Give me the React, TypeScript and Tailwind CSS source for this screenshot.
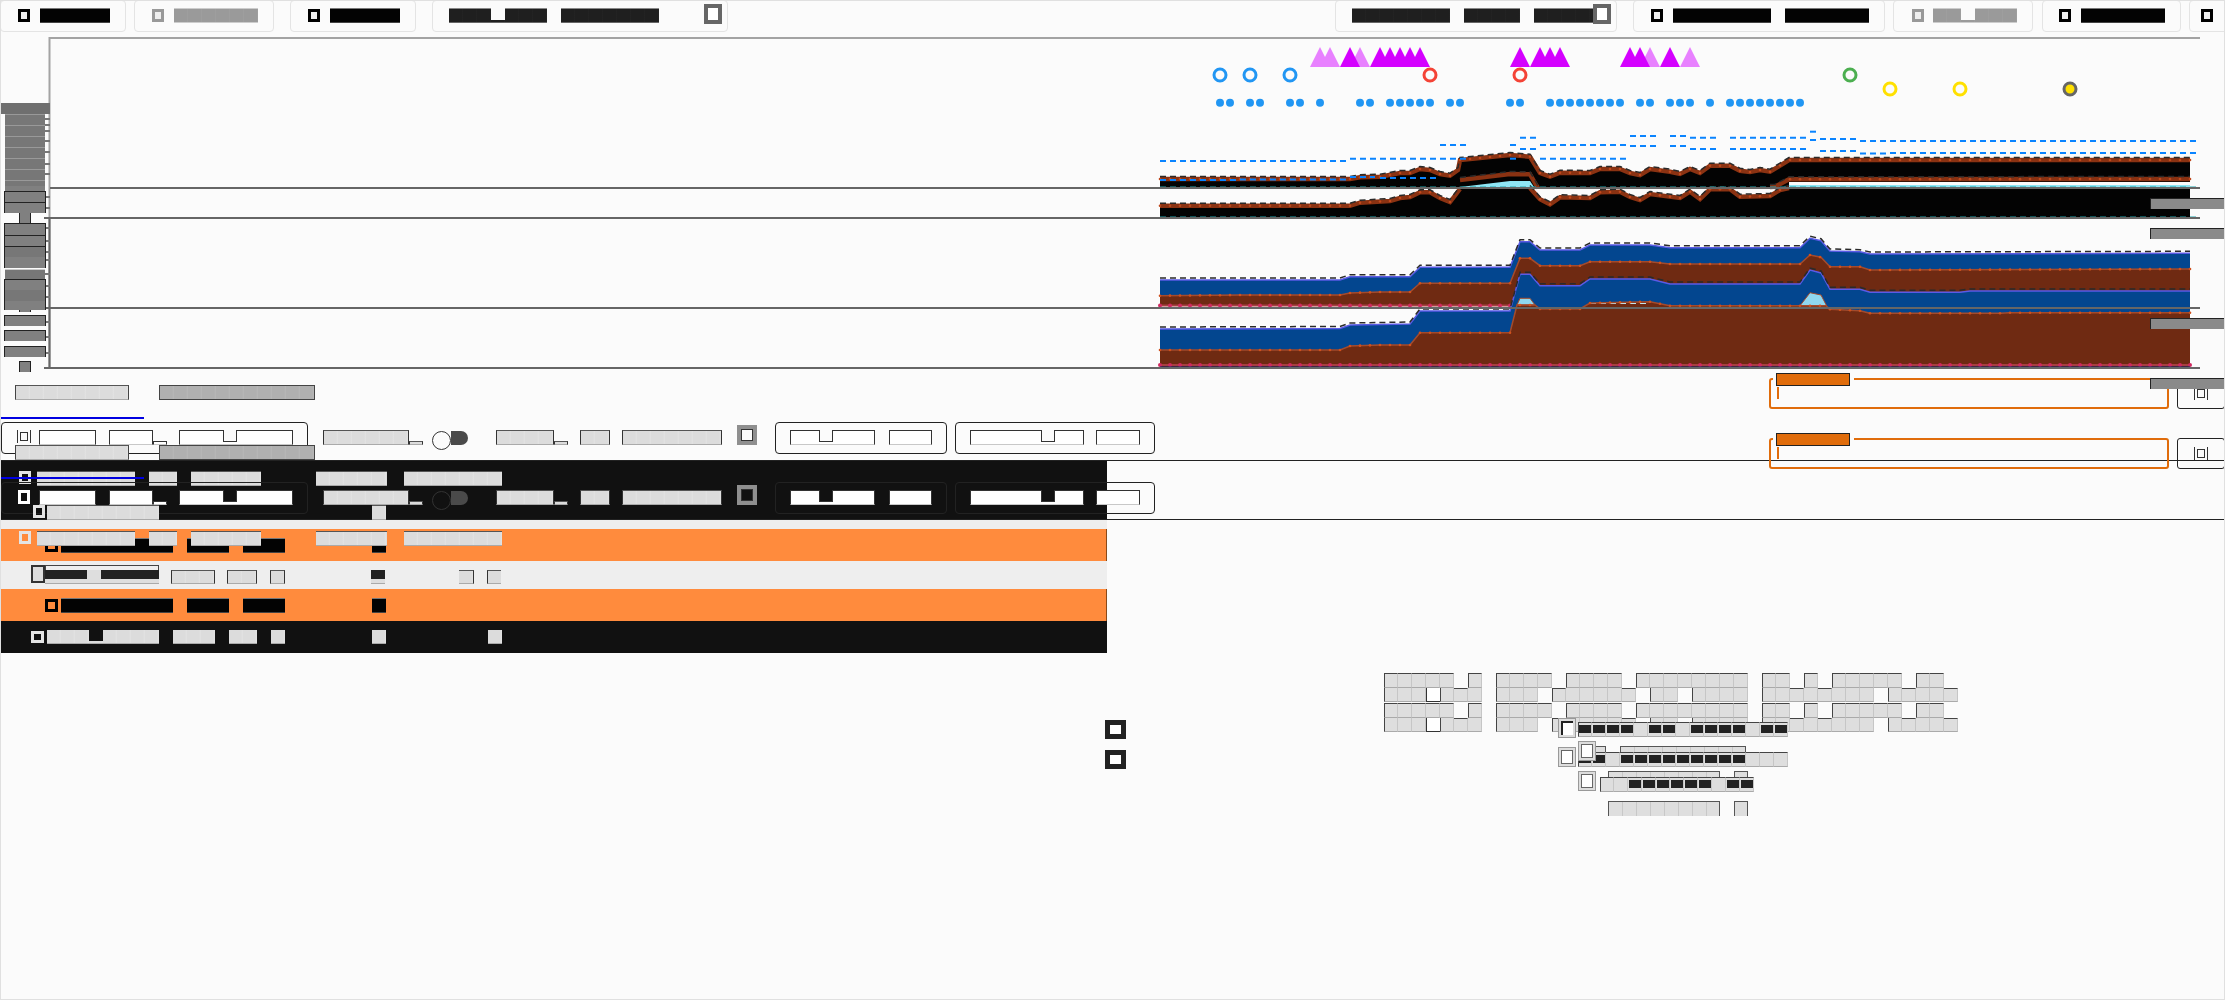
import clsx from "clsx";

type Pt = [number, number];
type Tone = "light" | "mid" | "black" | "dark" | "gray" | "white" | "grid";

const TONES: Record<Tone, string> = {
  light:
    "border-y border-t-[#555] border-b-[#aaa] bg-[repeating-linear-gradient(90deg,#dcdcdc_0,#dcdcdc_12px,#e3e3e3_14px)]",
  mid: "border border-[#444] bg-[repeating-linear-gradient(90deg,#b0b0b0_0,#b0b0b0_12px,#b8b8b8_14px)]",
  black: "border-y border-t-[#777] border-b-[#444] bg-[#030303]",
  dark: "border-y border-t-[#888] border-b-[#666] bg-[repeating-linear-gradient(90deg,#1f1f1f_0,#1f1f1f_13px,#262626_14px)]",
  gray: "border-y border-t-[#ccc] border-b-[#ccc] bg-[repeating-linear-gradient(90deg,#9a9a9a_0,#9a9a9a_13px,#a2a2a2_14px)]",
  white: "border-x border-t border-[#333] border-b border-b-[#c8c8c8] bg-white",
  grid: "border-x border-t border-[#555] bg-[repeating-linear-gradient(90deg,#dedede_0,#dedede_13px,#c8c8c8_13px,#c8c8c8_14px)]",
};

function Tofu({
  className = "",
  tone = "light",
  notch,
}: {
  className?: string;
  tone?: Tone;
  notch?: string;
}) {
  // default to one line of text unless the caller gave a height
  const placed = className.includes("absolute");
  const sized = /(^|\s)h-\[/.test(className);
  return (
    <div className={clsx(!placed && "relative", !sized && "h-[15px]", "shrink-0", TONES[tone], className)}>
      {notch && <div className={clsx("absolute -top-px h-[12px]", notch)} />}
    </div>
  );
}

function Check({ className }: { className?: string }) {
  return <div className={clsx("mt-px h-[13px] w-[12px] shrink-0 border-[3px] bg-[#eee]", className)} />;
}

function Glyph({ className }: { className?: string }) {
  return (
    <div className={clsx("flex h-[13px] w-[14px] items-center justify-center border-x border-[#333]", className)}>
      <div className="h-[9px] w-[8px] border border-[#333]" />
    </div>
  );
}

function Frame({ className }: { className?: string }) {
  return <div className={clsx("h-[20px] w-[18px] shrink-0 border-[4px] border-[#666] bg-white", className)} />;
}

function ToolButton({ className, children }: { className?: string; children: React.ReactNode }) {
  return (
    <div className={clsx("flex h-[32px] shrink-0 items-start rounded-[4px] border border-[#e4e4e4] pt-[7px]", className)}>
      {children}
    </div>
  );
}

function Toolbar() {
  return (
    <div className="flex h-[37px] items-start">
      <ToolButton className="w-[126px] pl-[17px]">
        <Check className="border-black" />
        <Tofu tone="black" className="ml-[10px] w-[70px]" />
      </ToolButton>
      <ToolButton className="ml-[8px] w-[140px] pl-[17px]">
        <Check className="border-[#999]" />
        <Tofu tone="gray" className="ml-[10px] w-[84px]" />
      </ToolButton>
      <ToolButton className="ml-[16px] w-[126px] pl-[17px]">
        <Check className="border-black" />
        <Tofu tone="black" className="ml-[10px] w-[70px]" />
      </ToolButton>
      <ToolButton className="ml-[16px] w-[296px] pl-[16px]">
        <Tofu tone="dark" className="w-[98px]" notch="left-[42px] w-[14px] bg-[#fbfbfb]" />
        <Tofu tone="dark" className="ml-[14px] w-[98px]" />
        <Frame className="ml-[45px] -mt-[4px]" />
      </ToolButton>
      <ToolButton className="ml-[607px] w-[282px] pl-[16px]">
        <Tofu tone="dark" className="w-[98px]" />
        <Tofu tone="dark" className="ml-[14px] w-[56px]" />
        <Tofu tone="dark" className="ml-[14px] w-[59px]" />
        <Frame className="-mt-[4px]" />
      </ToolButton>
      <ToolButton className="ml-[16px] w-[252px] pl-[17px]">
        <Check className="border-black" />
        <Tofu tone="black" className="ml-[10px] w-[98px]" />
        <Tofu tone="black" className="ml-[14px] w-[84px]" />
      </ToolButton>
      <ToolButton className="ml-[8px] w-[140px] pl-[18px]">
        <Check className="border-[#999]" />
        <Tofu tone="gray" className="ml-[9px] w-[84px]" notch="left-[28px] w-[14px] bg-[#fbfbfb]" />
      </ToolButton>
      <ToolButton className="ml-[9px] w-[139px] pl-[16px]">
        <Check className="border-black" />
        <Tofu tone="black" className="ml-[10px] w-[84px]" />
      </ToolButton>
      <ToolButton className="ml-[8px] w-[40px] pl-[11px]">
        <Check className="border-black" />
      </ToolButton>
    </div>
  );
}

const X0 = 1160;
const X1 = 2190;

const line = (pts: Pt[]) => pts.map(([x, y], i) => `${i ? "L" : "M"}${x} ${y}`).join("");
const band = (top: Pt[], bottom: Pt[]) => `${line(top)}${line([...bottom].reverse()).replace("M", "L")}Z`;
const flat = (y: number, a = X0, b = X1): Pt[] => [
  [a, y],
  [b, y],
];
const lift = (pts: Pt[], dy: number): Pt[] => pts.map(([x, y]) => [x, y + dy]);

function at(pts: Pt[], x: number) {
  for (let i = 1; i < pts.length; i++) {
    const [ax, ay] = pts[i - 1];
    const [bx, by] = pts[i];
    if (x <= bx) return ay + ((by - ay) * (x - ax)) / (bx - ax || 1);
  }
  return pts[pts.length - 1][1];
}

function Dots({ pts, fill, r = 1.6, from = X0, to = X1 }: { pts: Pt[]; fill: string; r?: number; from?: number; to?: number }) {
  const out = [];
  for (let x = from; x <= to; x += 10) out.push(<circle key={x} cx={x} cy={at(pts, x)} r={r} fill={fill} />);
  return <g>{out}</g>;
}

const blackTop: Pt[] = [[1160,179],[1350,179],[1360,177.3],[1380,176.7],[1400,173],[1410,173],[1420,169],[1430,170],[1440,174],[1450,175.7],[1458,170],[1460,160],[1510,155],[1530,156.7],[1540,173],[1550,176.7],[1560,172.7],[1590,173],[1600,169],[1620,169],[1630,173],[1640,175],[1650,169],[1670,171.7],[1680,174],[1690,169],[1700,173],[1710,165.7],[1730,165.7],[1740,170.7],[1750,172],[1760,170],[1770,171.7],[1789,160],[2190,160]];
const blackLow: Pt[] = [[1160,205.7],[1350,205.7],[1360,202.7],[1390,201],[1400,198],[1410,197],[1420,192.3],[1430,192.3],[1440,198],[1450,202],[1460,189],[1468,188],[1530,188],[1540,199.3],[1550,204.3],[1560,197.3],[1590,198],[1600,192.3],[1620,191.7],[1630,197],[1640,200],[1650,194],[1680,198],[1690,191.7],[1700,199],[1710,189.3],[1730,189.3],[1740,196.7],[1770,196],[1780,190],[1789,188],[2190,188]];
const innerA: Pt[] = [[1460,180],[1510,174],[1530,174.3],[1535,183],[1538,188]];
const innerB: Pt[] = [[1770,187],[1775,186.7],[1789,179.3],[2190,179]];

const midBlue: Pt[] = [[1160,280],[1340,280],[1350,276.7],[1410,276.7],[1420,267.3],[1510,267.3],[1520,241.7],[1530,241.7],[1540,250],[1580,250],[1590,245],[1650,245],[1670,247.7],[1800,247.7],[1810,238.3],[1821,240.7],[1830,251],[1860,251.7],[1870,254],[2190,253.3]];
const midBrown: Pt[] = [[1160,295.7],[1240,295],[1340,295],[1350,293],[1380,292],[1410,292],[1420,283.3],[1510,283.3],[1520,258.3],[1530,258.3],[1540,265.7],[1580,265.7],[1590,261.7],[1650,261.7],[1670,264],[1800,264],[1810,255],[1821,257.3],[1830,266.7],[1860,266.7],[1870,270],[2190,269]];
const lowBlue: Pt[] = [[1160,329],[1340,328.5],[1350,325],[1410,324],[1420,311],[1510,311],[1520,274.3],[1530,274.3],[1540,285.7],[1580,285.7],[1590,279],[1650,279],[1670,284],[1800,284],[1810,270],[1821,273],[1830,289.3],[1860,289.3],[1870,292.3],[1960,292.3],[1970,291],[2190,291]];
const lowBrown: Pt[] = [[1160,350],[1340,350],[1350,346],[1380,345],[1410,345],[1420,332.7],[1510,332.7],[1517,305],[1535,305],[1540,309],[1580,309],[1590,303],[1650,301.7],[1670,305.7],[1800,305.7],[1826,305.7],[1830,309.3],[1860,310.7],[1870,313.3],[2000,313.3],[2010,312.7],[2190,312.7]];

const triangles = {
  light: [1320, 1330, 1360, 1650, 1690],
  dark: [1350, 1380, 1390, 1400, 1410, 1420, 1520, 1540, 1550, 1560, 1630, 1640, 1670],
};
const dotXs = [1220,1230,1250,1260,1290,1300,1320,1360,1370,1390,1400,1410,1420,1430,1450,1460,1510,1520,1550,1560,1570,1580,1590,1600,1610,1620,1640,1650,1670,1680,1690,1710,1730,1740,1750,1760,1770,1780,1790,1800];
const dashes: [number, number, number][] = [[1160,1347,161],[1350,1467,158.7],[1440,1467,145],[1160,1237,180],[1240,1347,179.5],[1350,1375,177],[1380,1437,178],[1510,1517,158.7],[1540,1627,158.7],[1510,1517,145],[1540,1627,145],[1520,1537,137.7],[1520,1537,149],[1630,1657,136],[1630,1657,146],[1670,1687,136],[1670,1687,146],[1690,1717,137.7],[1690,1717,149],[1730,1806,137.7],[1730,1806,149],[1810,1816,131.7],[1810,1816,140],[1820,1856,139],[1820,1856,151],[1860,2196,141],[1860,1886,153.5],[1890,2196,153]];
const axisTicks = [109,119,125,131,141,152,164,174,197,208,228,241,252,260,274,286,297,322,337,353];

function Chart() {
  return (
    <svg width="2225" height="338" viewBox="0 37 2225 338" className="block overflow-visible">
      <path d="M49.5 368V38H2200" fill="none" stroke="#a3a3a3" strokeWidth="2" />
      <path d="M49.5 218V368" stroke="#666" strokeWidth="2" />

      {triangles.light.map((x) => (
        <path key={x} d={`M${x - 10} 67L${x} 47L${x + 10} 67Z`} fill="#e880ff" />
      ))}
      {triangles.dark.map((x) => (
        <path key={x} d={`M${x - 10} 67L${x} 47L${x + 10} 67Z`} fill="#d400ff" />
      ))}
      {[1220, 1250, 1290].map((x) => (
        <circle key={x} cx={x} cy="75" r="6" fill="none" stroke="#2196f3" strokeWidth="3" />
      ))}
      {[1430, 1520].map((x) => (
        <circle key={x} cx={x} cy="75" r="6" fill="none" stroke="#f44336" strokeWidth="3" />
      ))}
      <circle cx="1850" cy="75" r="6" fill="none" stroke="#4caf50" strokeWidth="3" />
      {[1890, 1960].map((x) => (
        <circle key={x} cx={x} cy="89" r="6" fill="none" stroke="#ffe000" strokeWidth="3" />
      ))}
      <circle cx="2070" cy="89" r="6" fill="#ffe000" stroke="#666" strokeWidth="3" />
      {dotXs.map((x) => (
        <circle key={x} cx={x} cy="102.7" r="4" fill="#2196f3" />
      ))}

      <path d={band(blackTop, flat(188))} fill="#030303" />
      <path d="M1460 187L1510 181L1530 181L1534 187Z" fill="#8fe6f5" />
      <path d="M1789 182H2190V185H1789Z" fill="#fbfbfb" />
      <path d="M1789 185H2190V187.5H1789Z" fill="#8fe6f5" />
      <path d={band(blackLow, flat(218))} fill="#030303" />
      {[blackTop, innerA, innerB, blackLow.slice(0, 11), blackLow.slice(12, 31)].map((pts, i) => (
        <g key={i}>
          <path d={line(pts)} fill="none" stroke="#8a3212" strokeWidth="4.5" />
          <path d={line(lift(pts, -2.5))} fill="none" stroke="#2a2a2a" strokeWidth="1.5" strokeDasharray="6 4" />
        </g>
      ))}
      <Dots pts={blackTop} fill="#c0481c" r={1.3} />
      <Dots pts={blackLow} fill="#c0481c" r={1.3} to={1450} />
      <Dots pts={blackLow} fill="#c0481c" r={1.3} from={1540} to={1780} />
      <Dots pts={innerB} fill="#c0481c" r={1.3} from={1790} />
      <path d="M1160 187H2200M1160 217H2200" stroke="#1fa5ad" strokeWidth="1" strokeDasharray="6 4" />

      <path d={band(midBrown, flat(306))} fill="#6f2a12" />
      <path d={band(midBlue, midBrown)} fill="#03468f" />
      <path d={line(midBrown)} fill="none" stroke="#a34a2c" strokeWidth="1.5" />
      <path d={line(midBlue)} fill="none" stroke="#5a5ae6" strokeWidth="1.5" />
      <path d={line(lift(midBlue, -2))} fill="none" stroke="#2a2a2a" strokeWidth="1.5" strokeDasharray="6 4" />
      <Dots pts={midBrown} fill="#d0501c" r={1.3} />
      <path d={line(flat(305.5))} stroke="#a84040" strokeWidth="2" />
      <Dots pts={flat(305.5)} fill="#d02860" r={2} to={1510} />

      <path d={band(lowBrown, flat(367))} fill="#6f2a12" />
      <path d={band(lowBlue, lowBrown)} fill="#03468f" />
      <path d="M1517 305L1520 298.3L1530 298.3L1535 305Z" fill="#8fd8f0" stroke="#a34a2c" />
      <path d="M1800 305.7L1810 292.7L1821 295L1826.6 305.7Z" fill="#8fd8f0" stroke="#a34a2c" />
      <path d="M1590 303.5H1650" stroke="#bfe6f0" strokeDasharray="6 4" />
      <path d={line(lowBrown)} fill="none" stroke="#a34a2c" strokeWidth="1.5" />
      <path d={line(lowBlue)} fill="none" stroke="#5a5ae6" strokeWidth="1.5" />
      <path d={line(lift(lowBlue, -2))} fill="none" stroke="#2a2a2a" strokeWidth="1.5" strokeDasharray="6 4" />
      <Dots pts={lowBrown} fill="#d0501c" r={1.3} />
      <path d={line(flat(365))} stroke="#a84040" strokeWidth="2" />
      <Dots pts={flat(365)} fill="#d02860" r={2} />
      <path d={line(flat(367.3))} stroke="#1a237e" strokeWidth="1.5" />

      <path d="M50 188H2200M44 218H2200M44 308H2200M44 368H2200" stroke="#666" strokeWidth="2" />
      {axisTicks.map((y) => (
        <path key={y} d={`M44 ${y}H50`} stroke="#777" strokeWidth="2" />
      ))}
      {dashes.map(([a, b, y]) => (
        <path key={`${a}-${y}`} d={`M${a} ${y}H${b}`} stroke="#0a84ff" strokeWidth="2" strokeDasharray="6 4" />
      ))}
    </svg>
  );
}

const SIDE_ROWS = [
  "mx-[5px] h-[11px] bg-[#777] border-t border-[#999]",
  "mx-[5px] h-[11px] bg-[#777] border-t border-[#999]",
  "mx-[5px] h-[11px] bg-[#777] border-t border-[#999]",
  "mx-[5px] h-[11px] bg-[#777] border-t border-[#999]",
  "mx-[5px] h-[11px] bg-[#777] border-t border-[#999]",
  "mx-[5px] h-[11px] bg-[#777] border-t border-[#999]",
  "mx-[5px] h-[6px] bg-[#777] border-t border-[#999]",
  "mx-[5px] h-[5px] bg-[#808080]",
  "mx-[4px] h-[11px] bg-[#808080] border-t border-x border-[#222]",
  "mx-[4px] h-[11px] bg-[#808080] border-t border-x border-[#222]",
  "mx-[19px] h-[10px] bg-[#808080] border-x border-[#222]",
  "mx-[4px] h-[12px] bg-[#808080] border-t border-x border-[#222]",
  "mx-[4px] h-[11px] bg-[#808080] border-t border-x border-[#222]",
  "mx-[4px] h-[11px] bg-[#777] border-t border-x border-[#222]",
  "mx-[4px] h-[11px] bg-[#808080] border-x border-[#222]",
  "mt-[1px] mx-[5px] h-[10px] bg-[#777] border-t border-[#ccc]",
  "mx-[4px] h-[11px] bg-[#808080] border-t border-x border-[#222]",
  "mx-[4px] h-[11px] bg-[#777] border-x border-[#222]",
  "mx-[4px] h-[9px] bg-[#808080] border-x border-[#222]",
  "mx-[19px] h-[2px] bg-[#808080] border-x border-[#222]",
  "mt-[3px] mx-[4px] h-[11px] bg-[#808080] border-t border-x border-[#222]",
  "mt-[4px] mx-[4px] h-[11px] bg-[#808080] border-t border-x border-[#222]",
  "mt-[5px] mx-[4px] h-[11px] bg-[#808080] border-t border-x border-[#222]",
  "mt-[4px] mx-[19px] h-[11px] bg-[#808080] border-t border-x border-[#222]",
];

function SideLabels() {
  return (
    <div className="absolute left-0 top-[103px] flex w-[50px] flex-col">
      <div className="h-[11px] bg-[#6f6f6f]" />
      {SIDE_ROWS.map((row, i) => (
        <div key={i} className={row} />
      ))}
    </div>
  );
}

function Tabs({ className }: { className?: string }) {
  return (
    <div className={clsx("absolute left-0 w-[320px]", className)}>
      <Tofu className="absolute left-[15px] top-0 w-[114px] border border-[#444]" />
      <Tofu tone="mid" className="absolute left-[159px] top-0 w-[156px]" />
      <div className="absolute left-0 top-[32px] h-[2px] w-[144px] bg-[#0000e0]" />
    </div>
  );
}

function ControlRow({ className, icon, hole }: { className?: string; icon: React.ReactNode; hole: string }) {
  return (
    <div className={clsx("absolute left-0 h-[32px] w-full", className)}>
      <div className="absolute left-[1px] top-0 h-[32px] w-[307px] rounded-[4px] border border-[#222]" />
      {icon}
      <Tofu tone="white" className="absolute left-[39px] top-[8px] w-[57px]" />
      <Tofu tone="white" className="absolute left-[109px] top-[8px] w-[44px]" />
      <Tofu tone="white" className="absolute left-[153px] top-[19px] h-[4px] w-[14px]" />
      <Tofu tone="white" className="absolute left-[179px] top-[8px] w-[114px]" notch={clsx("left-[43px] w-[14px] border-x border-b border-[#333]", hole)} />

      <Tofu className="absolute left-[323px] top-[8px] w-[86px] border-x border-x-[#333]" />
      <Tofu className="absolute left-[409px] top-[19px] h-[4px] w-[14px] border-x border-x-[#333]" />
      <div className="absolute left-[432px] top-[9px] h-[19px] w-[19px] rounded-full border border-[#333]" />
      <div className="absolute left-[451px] top-[9px] h-[14px] w-[17px] rounded-r-full bg-[#4a4a4a]" />
      <Tofu className="absolute left-[496px] top-[8px] w-[58px] border-x border-x-[#333]" />
      <Tofu className="absolute left-[554px] top-[19px] h-[4px] w-[14px] border-x border-x-[#333]" />
      <Tofu className="absolute left-[580px] top-[8px] w-[30px] border-x border-x-[#333]" />
      <Tofu className="absolute left-[622px] top-[8px] w-[100px] border-x border-x-[#333]" />
      <div className="absolute left-[737px] top-[3px] h-[20px] w-[20px] border-[4px] border-[#8f8f8f]">
        <div className="h-full w-full border border-[#333]" />
      </div>

      <div className="absolute left-[775px] top-0 h-[32px] w-[172px] rounded-[4px] border border-[#222]" />
      <Tofu tone="white" className="absolute left-[790px] top-[8px] w-[85px]" notch={clsx("left-[28px] w-[14px] border-x border-b border-[#333]", hole)} />
      <Tofu tone="white" className="absolute left-[889px] top-[8px] w-[43px]" />
      <div className="absolute left-[955px] top-0 h-[32px] w-[200px] rounded-[4px] border border-[#222]" />
      <Tofu tone="white" className="absolute left-[970px] top-[8px] w-[114px]" notch={clsx("left-[70px] w-[14px] border-x border-b border-[#333]", hole)} />
      <Tofu tone="white" className="absolute left-[1096px] top-[8px] w-[44px]" />
    </div>
  );
}

function HeadRow({ className }: { className?: string }) {
  return (
    <div className={clsx("absolute left-0 flex items-start pl-[19px]", className)}>
      <div className="h-[13px] w-[12px] shrink-0 border-[3px] border-[#e4e4e4]" />
      <Tofu className="ml-[6px] w-[98px]" />
      <Tofu className="ml-[14px] w-[28px]" />
      <Tofu className="ml-[14px] w-[70px]" />
      <Tofu className="ml-[55px] w-[71px]" />
      <Tofu className="ml-[17px] w-[98px]" />
    </div>
  );
}

function BlackRow() {
  return (
    <div className="flex h-[32px] w-[1107px] items-start border-r border-r-[#8a4a1a] bg-[#ff8b3d] pl-[45px] pt-[9px]">
      <div className="mt-[1px] h-[13px] w-[13px] shrink-0 border-[3px] border-black" />
      <Tofu tone="black" className="ml-[3px] w-[112px]" />
      <Tofu tone="black" className="ml-[14px] w-[42px]" />
      <Tofu tone="black" className="ml-[14px] w-[42px]" />
      <Tofu tone="black" className="ml-[87px] w-[14px]" />
    </div>
  );
}

function Cells({ rows, className }: { rows: string[]; className?: string }) {
  const filled = (r: number, c: number) => {
    const ch = rows[r]?.[c];
    return ch !== undefined && ch !== "0" && ch !== "h";
  };
  return (
    <div className={clsx("flex flex-col", className)}>
      {rows.map((row, r) => (
        <div key={r} className="flex">
          {row.split("").map((ch, c) => {
            if (ch === "0") return <div key={c} className="h-[14.5px] w-[14px]" />;
            if (ch === "h")
              return <div key={c} className="h-[14.5px] w-[14px] border-b border-l border-[#333] bg-white" />;
            return (
              <div
                key={c}
                className={clsx(
                  "flex h-[14.5px] w-[14px] items-center justify-center border-b border-r border-b-[#aaa] border-r-[#c6c6c6] bg-[#dedede]",
                  !filled(r - 1, c) && "border-t border-t-[#444]",
                  !filled(r, c + 1) && "border-r-[#444]",
                  !filled(r, c - 1) && "border-l border-l-[#444]",
                )}
              >
                {ch === "d" && <div className="h-[8px] w-[12px] bg-[#222]" />}
              </div>
            );
          })}
        </div>
      ))}
    </div>
  );
}

function CellStack() {
  return (
    <div className="ml-[1384px] mt-[20px] flex flex-col gap-px">
      {[0, 1].map((i) => (
        <div key={i} className="flex gap-[14px]">
          <Cells rows={["1111101", "111h111"]} />
          <Cells rows={["111101111011111111", "111011111101101111"]} />
          <Cells rows={["11010111110110", "11111111011111"]} />
        </div>
      ))}
    </div>
  );
}

function FramedBox({ className, dark }: { className?: string; dark?: boolean }) {
  return (
    <div className={clsx("absolute h-[20px] w-[18px] border border-[#999] bg-[#ddd] p-[2px]", className)}>
      <div className={clsx("h-full w-full bg-white", dark ? "border-l-2 border-t-2 border-[#222]" : "border border-[#666]")} />
    </div>
  );
}

function Bracket({ className }: { className?: string }) {
  return (
    <div className={clsx("absolute left-[1769px] h-[36px] w-[456px]", className)}>
      <div className="absolute left-0 top-[5px] h-[31px] w-[400px] rounded-[3px] border-2 border-[#e06c0b]" />
      <div className="absolute left-[4px] top-[5px] h-[2px] w-[81px] bg-[#fbfbfb]" />
      <div className="absolute left-[7px] top-0 h-[13px] w-[74px] border border-[#222] bg-[#e06c0b]" />
      <div className="absolute left-[8px] top-[14px] h-[12px] w-[2px] bg-[#e06c0b]" />
      <div className="absolute left-[408px] top-[5px] flex h-[31px] w-[48px] items-center justify-center rounded-[3px] border border-[#222]">
        <Glyph />
      </div>
    </div>
  );
}

export default function App() {
  return (
    <div className="relative h-[1000px] w-[2225px] overflow-hidden bg-[#fbfbfb] font-['Liberation_Sans',sans-serif]">
      <Toolbar />
      <Chart />
      <SideLabels />

      <div className="relative h-[85px]">
        <Tabs className="top-[10px]" />
        <ControlRow className="top-[47px]" hole="bg-[#fbfbfb]" icon={<Glyph className="absolute left-[17px] top-[8px]" />} />
      </div>

      <div className="h-[60px] w-full border-y border-r border-[#222]">
        <div className="relative h-full w-[1107px] bg-[#111]">
          <HeadRow className="top-[10px]" />
          <ControlRow
            className="top-[21px]"
            hole="bg-[#111]"
            icon={<div className="absolute left-[18px] top-[8px] h-[14px] w-[12px] border-[3px] border-white" />}
          />
          <div className="absolute left-[33px] top-[44px] h-[13px] w-[12px] border-[3px] border-[#e4e4e4]" />
          <Tofu className="absolute left-[47px] top-[44px] w-[112px]" />
          <Tofu className="absolute left-[372px] top-[44px] w-[14px]" />
          <Tabs className="-top-[16px]" />
        </div>
      </div>

      <div className="h-[9px] w-[1107px] bg-[#eee]" />
      <div className="relative">
        <BlackRow />
        <HeadRow className="top-[2px]" />
      </div>
      <div className="flex h-[28px] w-[1107px] items-start bg-[#eee] pl-[31px] pt-[9px]">
        <div className="mt-[-5px] h-[18px] w-[14px] shrink-0 border-2 border-[#333] bg-[#ddd]" />
        <div className="relative h-[14px] w-[114px] shrink-0 border-b border-[#aaa] bg-[#dedede]">
          <div className="absolute -top-[5px] left-0 h-[5px] w-full border-x border-t border-[#444]" />
          <div className="flex h-[9px]">
            <div className="w-[42px] bg-[#222]" />
            <div className="w-[14px]" />
            <div className="w-[58px] bg-[#222]" />
          </div>
        </div>
        <Tofu className="ml-[12px] h-[14px] w-[44px] border-x border-x-[#333]" />
        <Tofu className="ml-[12px] h-[14px] w-[30px] border-x border-x-[#333]" />
        <Tofu className="ml-[13px] h-[14px] w-[15px] border-x border-x-[#333]" />
        <div className="ml-[86px] h-[14px] w-[14px] shrink-0 border-b border-[#aaa] bg-[#dedede]">
          <div className="h-[9px] bg-[#222]" />
        </div>
        <Tofu className="ml-[74px] h-[14px] w-[15px] border-r border-r-[#333]" />
        <Tofu className="ml-[13px] h-[14px] w-[14px] border-l border-l-[#333]" />
      </div>
      <BlackRow />
      <div className="flex h-[32px] w-[1107px] items-start bg-[#111] pl-[31px] pt-[9px]">
        <div className="mt-[1px] h-[12px] w-[13px] shrink-0 border-[3px] border-[#e4e4e4]" />
        <Tofu className="ml-[3px] h-[14px] w-[112px] border-t-0" notch="left-[42px] w-[14px] bg-[#111]" />
        <Tofu className="ml-[14px] h-[14px] w-[42px] border-t-0" />
        <Tofu className="ml-[14px] h-[14px] w-[28px] border-t-0" />
        <Tofu className="ml-[14px] h-[14px] w-[14px] border-t-0" />
        <Tofu className="ml-[87px] h-[14px] w-[14px] border-t-0" />
        <Tofu className="ml-[102px] h-[14px] w-[14px] border-t-0" />
      </div>

      <CellStack />

      <div className="absolute left-[1105px] top-[720px] h-[19px] w-[21px] border-[5px] border-[#222] bg-white" />
      <div className="absolute left-[1105px] top-[750px] h-[19px] w-[21px] border-[5px] border-[#222] bg-white" />

      <FramedBox dark className="left-[1558px] top-[718px]" />
      <Cells className="absolute left-[1578px] top-[722px]" rows={["dddd1dd1dddd1dd"]} />
      <FramedBox className="left-[1558px] top-[747px]" />
      <Tofu tone="grid" className="absolute left-[1592px] top-[746px] h-[6px] w-[14px]" />
      <Tofu tone="grid" className="absolute left-[1620px] top-[746px] h-[6px] w-[126px]" />
      <Cells className="absolute left-[1578px] top-[752px]" rows={["dd1ddddddddd111"]} />
      <FramedBox className="left-[1578px] top-[741px]" />
      <Tofu tone="grid" className="absolute left-[1608px] top-[771px] h-[6px] w-[112px]" />
      <Tofu tone="grid" className="absolute left-[1734px] top-[771px] h-[6px] w-[14px]" />
      <Cells className="absolute left-[1600px] top-[777px]" rows={["11dddddd1dd"]} />
      <FramedBox className="left-[1578px] top-[771px]" />
      <Tofu tone="grid" className="absolute left-[1608px] top-[801px] w-[112px]" />
      <Tofu tone="grid" className="absolute left-[1734px] top-[801px] w-[14px]" />

      <Bracket className="top-[373px]" />
      <Bracket className="top-[433px]" />
      <div className="absolute left-[2150px] top-[198px] h-[11px] w-[75px] border-l border-t border-[#222] bg-[#8a8a8a]" />
      <div className="absolute left-[2150px] top-[228px] h-[11px] w-[75px] border-l border-t border-[#222] bg-[#8a8a8a]" />
      <div className="absolute left-[2150px] top-[318px] h-[11px] w-[75px] border-l border-t border-[#222] bg-[#8a8a8a]" />
      <div className="absolute left-[2150px] top-[378px] h-[11px] w-[75px] border-l border-t border-[#222] bg-[#8a8a8a]" />

      <div className="pointer-events-none absolute inset-0 border border-[#e0e0e0]" />
    </div>
  );
}
